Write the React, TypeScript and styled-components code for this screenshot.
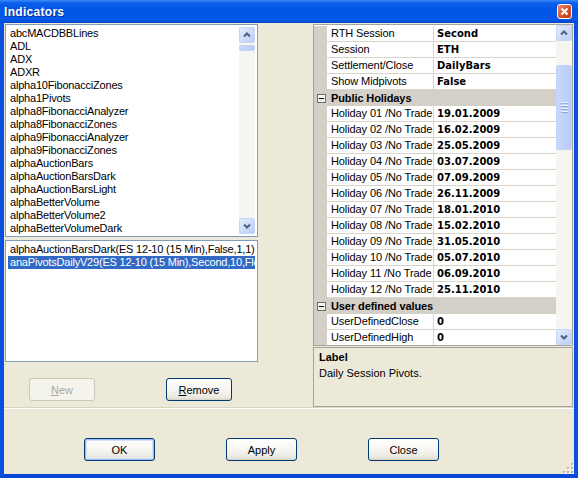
import React, { FC } from 'react';
import styled, { createGlobalStyle } from 'styled-components';

const GlobalStyle = createGlobalStyle`
    html, body {
        margin: 0;
        padding: 0;
        background: #ECE9D8;
    }
    body {
        font-family: "Liberation Sans", Arial, sans-serif;
        font-size: 11px;
        color: #000;
    }
`;

const Window = styled.div`
    width: 578px;
    height: 478px;
    display: flex;
    flex-direction: column;
    box-sizing: border-box;
    background: #ECE9D8;
    overflow: hidden;
`;

const TitleBar = styled.div`
    height: 23px;
    flex-shrink: 0;
    display: flex;
    align-items: center;
    padding: 0 6px 0 4px;
    background: linear-gradient(#3A8CF6 0, #0B5EEA 3px, #0156E6 45%, #0459EA 85%, #0444CC 100%);
`;

const Title = styled.span`
    color: #fff;
    font-weight: bold;
    font-size: 12px;
    letter-spacing: 0.3px;
    text-shadow: 1px 1px 0 #0A2E9E;
`;

const CloseBox = styled.div`
    margin-left: auto;
    width: 15px;
    height: 15px;
    box-sizing: border-box;
    border: 1px solid #fff;
    border-radius: 3px;
    background: linear-gradient(135deg, #E98D6F, #D4502B 55%, #C23A14);
    display: flex;
    align-items: center;
    justify-content: center;
`;

const Frame = styled.div`
    flex: 1;
    display: flex;
    flex-direction: column;
    border-left: 4px solid #0A4FDF;
    border-right: 4px solid #0A4FDF;
    border-bottom: 4px solid #0A47D6;
`;

const Top = styled.div`
    height: 384px;
    display: flex;
    padding: 1px 1px 0 1px;
    box-sizing: border-box;
`;

const LeftColumn = styled.div`
    width: 253px;
    display: flex;
    flex-direction: column;
    gap: 3px;
`;

const RightColumn = styled.div`
    margin-left: auto;
    width: 260px;
    display: flex;
    flex-direction: column;
    gap: 1px;
`;

const ListBox = styled.div<{ $height: number }>`
    height: ${p => p.$height}px;
    box-sizing: border-box;
    border: 1px solid #7F9DB9;
    background: #fff;
    padding: 2px;
    display: flex;
    overflow: hidden;
`;

const Items = styled.div`
    flex: 1;
    min-width: 0;
    overflow: hidden;
`;

const Item = styled.div<{ $selected?: boolean }>`
    height: 13px;
    line-height: 13px;
    padding-left: 2px;
    white-space: nowrap;
    overflow: hidden;
    letter-spacing: -0.2px;
    background: ${p => (p.$selected ? '#316AC5' : 'transparent')};
    color: ${p => (p.$selected ? '#fff' : '#000')};
`;

const ScrollBar = styled.div`
    width: 16px;
    flex-shrink: 0;
    display: flex;
    flex-direction: column;
    background: #F6F5F0;
`;

const ScrollArrow = styled.div`
    width: 16px;
    height: 16px;
    flex-shrink: 0;
    box-sizing: border-box;
    border: 1px solid #C5D5FB;
    border-radius: 2px;
    background: linear-gradient(135deg, #E4ECFD, #BBCDF6);
    display: flex;
    align-items: center;
    justify-content: center;
`;

const ScrollRail = styled.div`
    flex: 1;
    display: flex;
    flex-direction: column;
`;

const ScrollThumb = styled.div<{ $offset: number; $size: number }>`
    margin-top: ${p => p.$offset}px;
    height: ${p => p.$size}px;
    box-sizing: border-box;
    border: 1px solid #C2D3FB;
    border-radius: 2px;
    background: linear-gradient(90deg, #C8D8FC, #B8CBF6);
    display: flex;
    flex-direction: column;
    align-items: center;
    justify-content: center;
    gap: 1px;
`;

const GripLine = styled.div`
    width: 7px;
    height: 1px;
    background: #EEF4FE;
    border-bottom: 1px solid #8CAAE6;
`;

const ListButtons = styled.div`
    display: flex;
    gap: 71px;
    padding: 13px 0 0 24px;
`;

const Button = styled.button<{ $width: number; $default?: boolean }>`
    width: ${p => p.$width}px;
    height: 23px;
    padding: 0;
    box-sizing: border-box;
    border: 1px solid #003C74;
    border-radius: 3px;
    background: linear-gradient(#FFFFFF, #F5F4EF 55%, #E9E7DE 88%, #D8D2C6);
    box-shadow: ${p => (p.$default ? 'inset 0 0 0 1px #9DBBF0, inset 0 0 0 2px #D4E3FB' : 'none')};
    font-family: "Liberation Sans", Arial, sans-serif;
    font-size: 11px;
    color: #000;

    &:disabled {
        border-color: #C9C7BA;
        background: #F5F4EA;
        color: #ACA899;
    }
`;

const Mnemonic = styled.span`
    text-decoration: underline;
`;

const Grid = styled.div`
    height: 322px;
    box-sizing: border-box;
    border: 1px solid #A5A39A;
    background: #fff;
    display: flex;
    overflow: hidden;
`;

const Rows = styled.div`
    flex: 1;
    min-width: 0;
    padding-top: 1px;
    overflow: hidden;
`;

const Row = styled.div`
    height: 16px;
    display: grid;
    grid-template-columns: 13px 107px 1fr;
`;

const Gutter = styled.div`
    background: #D4D0C8;
`;

const NameCell = styled.div`
    box-sizing: border-box;
    border-right: 1px solid #D7D4CB;
    border-bottom: 1px solid #D7D4CB;
    padding-left: 4px;
    line-height: 15px;
    white-space: nowrap;
    overflow: hidden;
    letter-spacing: -0.1px;
`;

const ValueCell = styled.div`
    box-sizing: border-box;
    border-bottom: 1px solid #D7D4CB;
    padding-left: 3px;
    line-height: 15px;
    font-family: "DejaVu Sans", Verdana, sans-serif;
    font-weight: bold;
    font-size: 10px;
    white-space: nowrap;
    overflow: hidden;
`;

const CategoryRow = styled.div`
    height: 16px;
    display: flex;
    align-items: center;
    background: #D4D0C8;
`;

const ExpandBox = styled.div`
    width: 9px;
    height: 9px;
    margin: 0 5px 0 3px;
    box-sizing: border-box;
    border: 1px solid #6E6E6E;
    background: #F4F3EF;
    display: flex;
    align-items: center;
    justify-content: center;

    &::after {
        content: '';
        width: 5px;
        height: 1px;
        background: #000;
    }
`;

const CategoryName = styled.span`
    font-weight: bold;
    font-size: 11px;
    letter-spacing: -0.1px;
`;

const HelpPanel = styled.div`
    height: 60px;
    box-sizing: border-box;
    border: 1px solid #A5A39A;
    padding: 3px 5px;
    display: flex;
    flex-direction: column;
    gap: 3px;
`;

const HelpTitle = styled.div`
    font-weight: bold;
    line-height: 13px;
`;

const HelpText = styled.div`
    line-height: 13px;
`;

const Separator = styled.div`
    height: 1px;
    background: #D8D5C6;
    border-bottom: 1px solid #fff;
`;

const Footer = styled.div`
    flex: 1;
    display: flex;
    gap: 71px;
    padding: 29px 0 0 80px;
`;

const Grip = styled.div`
    margin-left: auto;
    align-self: flex-end;
    width: 12px;
    height: 12px;
`;

const Chevron: FC<{ down?: boolean }> = ({ down }) => (
    <svg width="8" height="6" viewBox="0 0 8 6">
        <path
            d={down ? 'M1 1.5 L4 4.5 L7 1.5' : 'M1 4.5 L4 1.5 L7 4.5'}
            fill="none"
            stroke="#4D6185"
            strokeWidth="2"
        />
    </svg>
);

interface IScroller {
    offset: number;
    size: number;
    grip?: boolean;
}

const Scroller: FC<IScroller> = ({ offset, size, grip }) => (
    <ScrollBar>
        <ScrollArrow><Chevron /></ScrollArrow>
        <ScrollRail>
            <ScrollThumb $offset={offset} $size={size}>
                {grip ? [0, 1, 2, 3].map(i => <GripLine key={i} />) : null}
            </ScrollThumb>
        </ScrollRail>
        <ScrollArrow><Chevron down /></ScrollArrow>
    </ScrollBar>
);

const available = [
    'abcMACDBBLines',
    'ADL',
    'ADX',
    'ADXR',
    'alpha10FibonacciZones',
    'alpha1Pivots',
    'alpha8FibonacciAnalyzer',
    'alpha8FibonacciZones',
    'alpha9FibonacciAnalyzer',
    'alpha9FibonacciZones',
    'alphaAuctionBars',
    'alphaAuctionBarsDark',
    'alphaAuctionBarsLight',
    'alphaBetterVolume',
    'alphaBetterVolume2',
    'alphaBetterVolumeDark',
];

const applied = [
    'alphaAuctionBarsDark(ES 12-10 (15 Min),False,1,1)',
    'anaPivotsDailyV29(ES 12-10 (15 Min),Second,10,Floor,True)',
];

type GridEntry =
    | { kind: 'prop'; name: string; value: string }
    | { kind: 'category'; name: string };

const holidays = [
    '19.01.2009', '16.02.2009', '25.05.2009', '03.07.2009', '07.09.2009', '26.11.2009',
    '18.01.2010', '15.02.2010', '31.05.2010', '05.07.2010', '06.09.2010', '25.11.2010',
];

const entries: GridEntry[] = [
    { kind: 'prop', name: 'RTH Session', value: 'Second' },
    { kind: 'prop', name: 'Session', value: 'ETH' },
    { kind: 'prop', name: 'Settlement/Close', value: 'DailyBars' },
    { kind: 'prop', name: 'Show Midpivots', value: 'False' },
    { kind: 'category', name: 'Public Holidays' },
    ...holidays.map((d, i): GridEntry => ({
        kind: 'prop',
        name: `Holiday ${String(i + 1).padStart(2, '0')} /No Trade`,
        value: d,
    })),
    { kind: 'category', name: 'User defined values' },
    { kind: 'prop', name: 'UserDefinedClose', value: '0' },
    { kind: 'prop', name: 'UserDefinedHigh', value: '0' },
];

const App: FC = () => {
    return (
        <Window>
            <GlobalStyle />
            <TitleBar>
                <Title>Indicators</Title>
                <CloseBox>
                    <svg width="9" height="9" viewBox="0 0 9 9">
                        <path d="M1.5 1.5 L7.5 7.5 M7.5 1.5 L1.5 7.5" stroke="#fff" strokeWidth="2" />
                    </svg>
                </CloseBox>
            </TitleBar>
            <Frame>
                <Top>
                    <LeftColumn>
                        <ListBox $height={213}>
                            <Items>
                                {available.map(name => <Item key={name}>{name}</Item>)}
                            </Items>
                            <Scroller offset={2} size={6} />
                        </ListBox>
                        <ListBox $height={122}>
                            <Items>
                                {applied.map((name, i) => (
                                    <Item key={name} $selected={i === 1}>{name}</Item>
                                ))}
                            </Items>
                        </ListBox>
                        <ListButtons>
                            <Button $width={66} disabled><Mnemonic>N</Mnemonic>ew</Button>
                            <Button $width={66}><Mnemonic>R</Mnemonic>emove</Button>
                        </ListButtons>
                    </LeftColumn>
                    <RightColumn>
                        <Grid>
                            <Rows>
                                {entries.map(e =>
                                    e.kind === 'category' ? (
                                        <CategoryRow key={e.name}>
                                            <ExpandBox />
                                            <CategoryName>{e.name}</CategoryName>
                                        </CategoryRow>
                                    ) : (
                                        <Row key={e.name}>
                                            <Gutter />
                                            <NameCell>{e.name}</NameCell>
                                            <ValueCell>{e.value}</ValueCell>
                                        </Row>
                                    )
                                )}
                            </Rows>
                            <Scroller offset={24} size={85} grip />
                        </Grid>
                        <HelpPanel>
                            <HelpTitle>Label</HelpTitle>
                            <HelpText>Daily Session Pivots.</HelpText>
                        </HelpPanel>
                    </RightColumn>
                </Top>
                <Separator />
                <Footer>
                    <Button $width={71} $default>OK</Button>
                    <Button $width={71}>Apply</Button>
                    <Button $width={71}>Close</Button>
                    <Grip>
                        <svg width="12" height="12" viewBox="0 0 12 12">
                            {[[9, 1], [5, 5], [9, 5], [1, 9], [5, 9], [9, 9]].map(([x, y]) => (
                                <g key={`${x}-${y}`}>
                                    <rect x={x + 1} y={y + 1} width="2" height="2" fill="#fff" />
                                    <rect x={x} y={y} width="2" height="2" fill="#B8B4A2" />
                                </g>
                            ))}
                        </svg>
                    </Grip>
                </Footer>
            </Frame>
        </Window>
    );
};

export default App;
